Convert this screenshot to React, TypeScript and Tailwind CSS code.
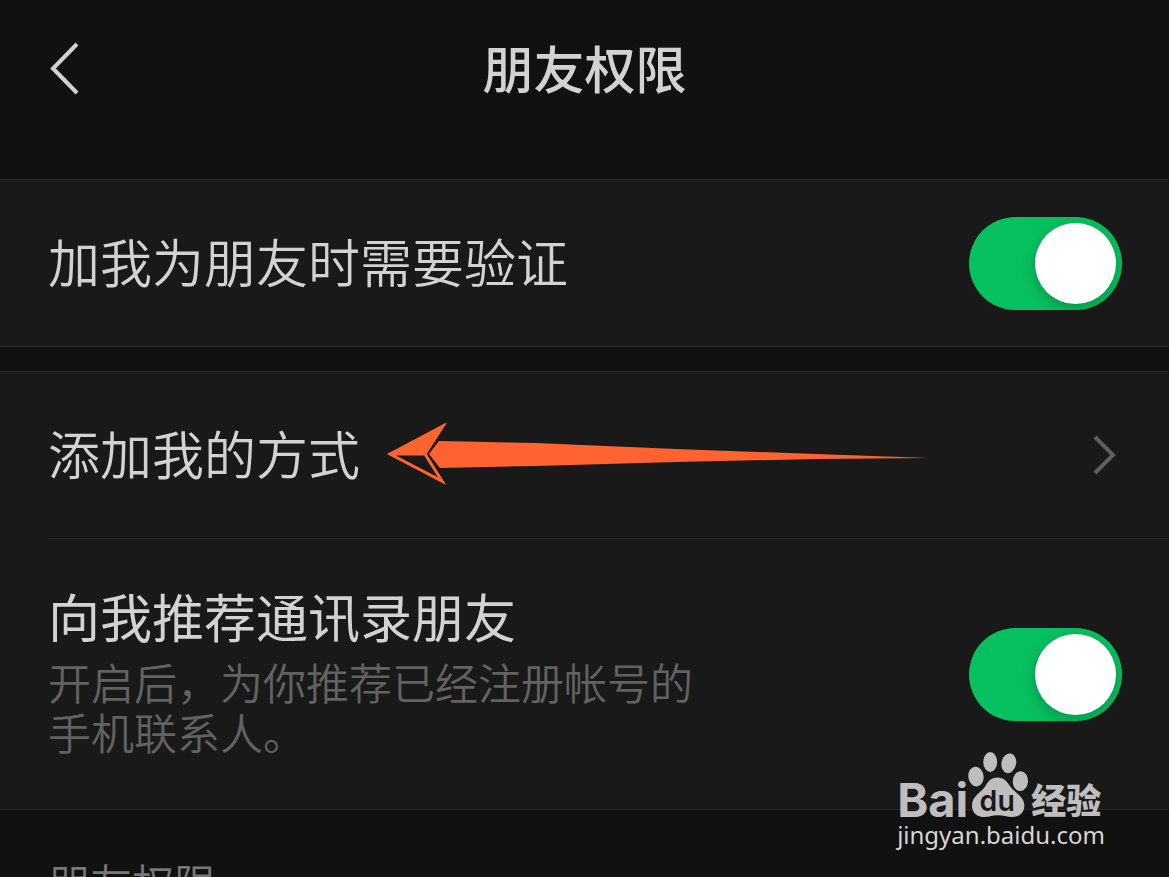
import { useState } from "react";

function Toggle({ id, defaultOn = true }: { id: string; defaultOn?: boolean }) {
  const [on, setOn] = useState(defaultOn);

  return (
    <input
      id={id}
      type="checkbox"
      role="switch"
      checked={on}
      onChange={(e) => setOn(e.target.checked)}
      className="flex h-[93px] w-[153px] shrink-0 cursor-pointer appearance-none items-center overflow-hidden rounded-full bg-[#4a4a4a] px-[6px] transition-colors before:size-[81px] before:rounded-full before:bg-white before:shadow-[0_4px_14px_rgba(0,0,0,0.25)] before:content-[''] checked:justify-end checked:bg-[#07c160]"
    />
  );
}

function PointerArrow() {
  return (
    <svg viewBox="0 0 544 62" className="mb-[2px] ml-[26px] h-[62px] w-[544px] shrink-0" aria-hidden="true">
      <path d="M53 18 L150 20 L290 26 L430 31 L543 35 L430 36 L290 39 L150 43 L54 45 L43 31 Z" fill="#ff6430" />
      <path d="M2 31 L59 2 L40 31 Z" fill="#ff6430" />
      <path d="M2 31 L57 60 L40 31 Z" fill="#191919" />
      <path d="M4 31 L57 3 L39 31 L56 58 Z M4 31 H39" fill="none" stroke="#ff6430" strokeWidth="3" />
    </svg>
  );
}

function Paw() {
  return (
    <svg viewBox="266 36 184 200" className="h-[67px] w-[61px]" fill="#bebebe" aria-hidden="true">
      <ellipse cx="290" cy="112" rx="23" ry="30" transform="rotate(-8 290 112)" />
      <ellipse cx="333" cy="68" rx="21" ry="30" />
      <ellipse cx="389" cy="72" rx="22" ry="30" transform="rotate(12 389 72)" />
      <ellipse cx="424" cy="126" rx="23" ry="30" transform="rotate(4 424 126)" />
      <path d="M355 115 C335 115 327 127 318 141 C307 160 278 170 278 199 C278 222 294 234 316 234 C331 234 340 229 356 229 C373 229 383 234 399 234 C421 234 436 220 436 200 C436 172 405 160 392 140 C383 127 375 115 355 115 Z" />
      <text x="301" y="215" fontSize="86" fontWeight="600" fill="#191919" className="font-['Inter',sans-serif]">
        du
      </text>
    </svg>
  );
}

function Watermark() {
  return (
    <div className="pointer-events-none absolute right-[64px] bottom-[25px] text-[#bebebe]">
      <div className="flex h-[67px] items-end">
        <span className="font-['Inter',sans-serif] text-[47px] leading-[36px] font-bold">Bai</span>
        <Paw />
        <span className="ml-[2px] text-[35px] leading-[39px] font-black">经验</span>
      </div>
      <div className="font-['Noto_Sans',sans-serif] text-[24px] leading-[34px] font-normal text-[#d6d6d6]">
        jingyan.baidu.com
      </div>
    </div>
  );
}

export default function App() {
  return (
    <main className="relative h-screen overflow-hidden bg-[#111111] font-['Noto_Sans_CJK_SC',sans-serif] text-[#d2d2d2]">
      <header className="grid h-[179px] grid-cols-[1fr_auto_1fr] items-start pt-8">
        <button type="button" aria-label="返回" className="ml-[46px] flex h-[72px] w-10 items-center">
          <svg viewBox="0 0 40 60" className="h-[60px] w-10" fill="none" stroke="currentColor" strokeWidth="4">
            <path d="M31 6 L7 30.5 L31 55" />
          </svg>
        </button>
        <h1 className="text-[51px] leading-[70px] font-medium">朋友权限</h1>
      </header>

      <section className="border-y border-[#272727] bg-[#191919]">
        <div className="flex h-[166px] items-center justify-between pr-[47px] pl-12">
          <label htmlFor="verify" className="pb-1 text-[52px] leading-[64px] font-[350]">
            加我为朋友时需要验证
          </label>
          <Toggle id="verify" />
        </div>
      </section>

      <section className="mt-6 border-y border-[#272727] bg-[#191919]">
        <a href="#methods" className="flex h-[166px] items-center pr-[50px] pl-12">
          <span className="shrink-0 pb-1 text-[52px] leading-[64px] font-[350]">添加我的方式</span>
          <PointerArrow />
          <svg viewBox="0 0 28 44" className="ml-auto h-11 w-7 shrink-0" fill="none" stroke="#5e5e5e" strokeWidth="4" aria-hidden="true">
            <path d="M4 4 L22 22 L4 40" />
          </svg>
        </a>
        <div className="ml-12 flex h-[271px] items-center justify-between border-t border-[#242424] pr-[47px]">
          <div className="pb-2">
            <label htmlFor="recommend" className="block text-[52px] leading-[64px] font-normal">
              向我推荐通讯录朋友
            </label>
            <p className="mt-2 max-w-[660px] text-[43px] leading-[50px] font-[350] text-[#626262]">
              开启后，为你推荐已经注册帐号的手机联系人。
            </p>
          </div>
          <Toggle id="recommend" />
        </div>
      </section>

      <h2 className="mt-10 pl-12 text-[42px] leading-[64px] font-[350] text-[#777777]">朋友权限</h2>

      <Watermark />
    </main>
  );
}
